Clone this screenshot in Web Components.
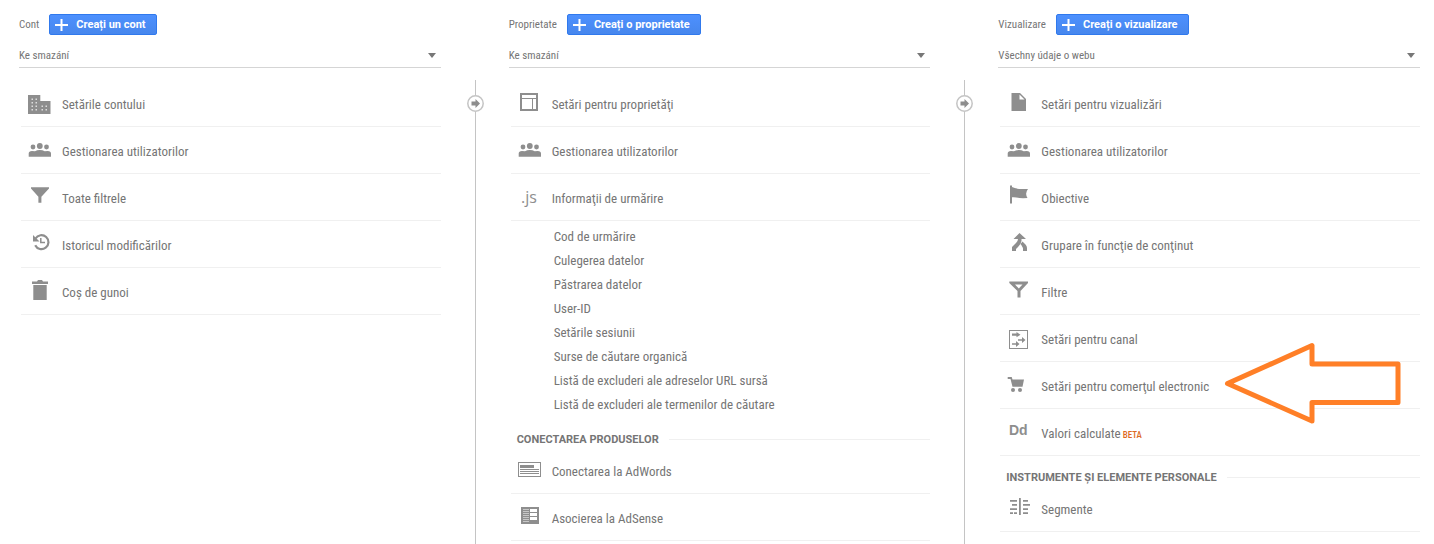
<!DOCTYPE html>
<html lang="ro">
<head>
<meta charset="utf-8">
<meta name="viewport" content="width=device-width, initial-scale=1">
<title>Administrare</title>
<style>
body { margin: 0; background: #fff; color: #757575; font-family: "Roboto Condensed", Roboto, "Liberation Sans", sans-serif; }
</style>
</head>
<body>
<admin-board>
  <admin-column label="Cont" action="Creați un cont" value="Ke smazání">
    <admin-row icon="building">Setările contului</admin-row>
    <admin-row icon="people">Gestionarea utilizatorilor</admin-row>
    <admin-row icon="funnel">Toate filtrele</admin-row>
    <admin-row icon="history">Istoricul modificărilor</admin-row>
    <admin-row icon="trash">Coș de gunoi</admin-row>
  </admin-column>
  <column-link></column-link>
  <admin-column label="Proprietate" action="Creați o proprietate" value="Ke smazání">
    <admin-row icon="layout">Setări pentru proprietăţi</admin-row>
    <admin-row icon="people">Gestionarea utilizatorilor</admin-row>
    <admin-row icon="js">Informaţii de urmărire</admin-row>
    <sub-menu>
      <sub-item>Cod de urmărire</sub-item>
      <sub-item>Culegerea datelor</sub-item>
      <sub-item>Păstrarea datelor</sub-item>
      <sub-item>User-ID</sub-item>
      <sub-item>Setările sesiunii</sub-item>
      <sub-item>Surse de căutare organică</sub-item>
      <sub-item>Listă de excluderi ale adreselor URL sursă</sub-item>
      <sub-item>Listă de excluderi ale termenilor de căutare</sub-item>
    </sub-menu>
    <section-title>CONECTAREA PRODUSELOR</section-title>
    <admin-row icon="adwords">Conectarea la AdWords</admin-row>
    <admin-row icon="adsense">Asocierea la AdSense</admin-row>
  </admin-column>
  <column-link></column-link>
  <admin-column label="Vizualizare" action="Creați o vizualizare" value="Všechny údaje o webu">
    <admin-row icon="file">Setări pentru vizualizări</admin-row>
    <admin-row icon="people">Gestionarea utilizatorilor</admin-row>
    <admin-row icon="flag">Obiective</admin-row>
    <admin-row icon="merge">Grupare în funcţie de conţinut</admin-row>
    <admin-row icon="filter">Filtre</admin-row>
    <admin-row icon="channel">Setări pentru canal</admin-row>
    <admin-row icon="cart">Setări pentru comerţul electronic<callout-arrow slot="callout"></callout-arrow></admin-row>
    <admin-row icon="dd">Valori calculate<beta-tag slot="tag">BETA</beta-tag></admin-row>
    <section-title>INSTRUMENTE ȘI ELEMENTE PERSONALE</section-title>
    <admin-row icon="segments">Segmente</admin-row>
  </admin-column>
</admin-board>

<script>
const define = (name, html, setup) => customElements.define(name, class extends HTMLElement {
  constructor() {
    super();
    const template = document.createElement('template');
    template.innerHTML = html;
    this.attachShadow({ mode: 'open' }).append(template.content);
  }
  connectedCallback() { if (setup) setup(this, this.shadowRoot); }
});

const icons = {
  building: '<path d="M0 7h12.300v6H22.500v13H0z"/><path fill="#fff" opacity=".7" d="M3.500 10.500H5V12H3.500zM7.500 10.500H9V12H7.500zM3.500 14H5v1.500H3.500zM7.500 14H9v1.500H7.500zM3.500 17.500H5V19H3.500zM7.500 17.500H9V19H7.500zM3.500 21H5v1.500H3.500zM7.500 21H9v1.500H7.500zM13.500 17.500H15V19h-1.500zM17.500 17.500H19V19h-1.500zM13.500 21H15v1.500h-1.500zM17.500 21H19v1.500h-1.500z"/>',
  people: '<circle cx="5" cy="12" r="2.400"/><circle cx="11.800" cy="11" r="2.900"/><circle cx="18.500" cy="12" r="2.400"/><path d="M.7 21.700V18.500Q.7 16 4 16q2 0 3 .3Q9 15 11.800 15t4.900 1.300q1-.3 3-.3 3.300 0 3.300 2.500v3.200z"/>',
  funnel: '<path d="M3 5.300h18v1.200l-7.600 8.200v6h-3v-6L3 6.500z"/>',
  history: '<path d="M7.500 9.500A7 7 0 1 1 7.200 16.300" fill="none" stroke="#8e8e8e" stroke-width="2.200"/><path d="M5 6v6.500h6.500z"/><path d="M12.800 9v4.500h4.200" fill="none" stroke="#8e8e8e" stroke-width="1.500"/>',
  trash: '<path d="M4 5.500h5L10 4h4l1 1.500h5V8H4zM5.300 9h13.400v15H5.300z"/>',
  layout: '<path fill-rule="evenodd" d="M2 5h18v18H2zM4 7v14h14V7z"/><path d="M4 10h14v1H4zM14 11h1v10h-1z"/>',
  js: '<text x="3" y="21" font-family="Open Sans" font-size="16">.js</text>',
  adwords: '<path fill-rule="evenodd" d="M0 7h23v15H0zM1 8v13h21V8z"/><path d="M2 10h14v3H2zM2 14h19v1H2zM2 16h19v1H2zM2 18h19v1H2z"/>',
  adsense: '<path d="M3 5h18v17H3z"/><path fill="#fff" d="M12 7h7v3h-7zM12 11h7v3h-7zM12 15h7v3h-7z"/><path fill="#fff" opacity=".5" d="M5 7h6v1H5zM5 9h6v1H5zM5 11h6v1H5zM5 13h6v1H5zM5 15h6v1H5zM5 17h6v1H5zM5 19h6v1H5z"/>',
  file: '<path d="M4.500 5H13l6 6v12H4.500z"/><path fill="#fff" d="M12.500 6.500 17.500 11.500H12.500z"/>',
  flag: '<path d="M3 3.500h2V5q3 1.500 7 2h9q-3.500 4.500-.5 9-7 .5-11-.5-2.500-.6-4.500-.2v6.200H3z"/>',
  merge: '<path d="M12.500 4 19 10H14.500V12Q14 15 11 18L9 20V22H5V18L9 14Q11 12 11 10H6.500zM13.500 15l2-2.500 3 3Q20 17 20 19v3h-4v-2.500q0-1-2.500-4.500z"/>',
  filter: '<path fill-rule="evenodd" d="M2.300 5.500H21V7l-7.500 8v6.500h-3V15L2.300 7zM8 8.500 11.800 12.500l3.700-4z"/>',
  channel: '<path fill-rule="evenodd" d="M2 7h19v19H2zM3 8v17h17V8z"/><path d="M5 10.500h4.500V9l4 2.700-4 2.600v-1.600H5zM11 16.200h4V14l3.500 3-3.500 3v-2.200h-4zM5 20.200h4V18l3.500 3L9 24v-2.200H5z"/>',
  cart: '<path d="M.7 7h4L5.500 9.500H17l-1.500 7.300H5.500L3.500 9H.7z"/><circle cx="6" cy="20" r="2"/><circle cx="13" cy="20" r="2"/>',
  dd: '<text x="2" y="18" font-family="Liberation Sans" font-weight="700" font-size="14">Dd</text>',
  segments: '<path d="M3 7h7v1.800H3zM5 11h5v1.800H5zM3 15.300h7v1.800H3zM3 19.300h3v1.800H3zM7 19.300h3v1.800H7zM12 5h1.800v17H12zM16 7h5v1.800h-5zM16 11h7v1.800h-7zM16 15.300h5v1.800h-5zM16 19.300h5v1.800h-5z"/>'
};

define('admin-board', `
<style>
:host { display: grid; grid-template-columns: minmax(0, 1fr) 68px minmax(0, 1fr) 68px minmax(0, 1fr); padding: 14px 14px 0 19px; min-height: 100vh; box-sizing: border-box; }
</style><slot></slot>`);

define('admin-column', `
<style>
:host { display: block; }
header { display: flex; align-items: center; gap: 10px; height: 21px; }
h2 { margin: 0; font-size: 11px; font-weight: 400; line-height: 20px; }
button { display: flex; align-items: center; gap: 8px; height: 21px; padding: 0 10px 0 5px; border: 1px solid #3079ed; border-radius: 2px; background: linear-gradient(#4d90fe, #4787ed); color: #fff; font-family: Roboto, sans-serif; font-size: 11px; font-weight: 700; line-height: 18px; white-space: nowrap; }
button svg { flex: none; width: 13px; height: 13px; }
.picker { display: flex; align-items: center; margin-top: 8px; height: 24px; border-bottom: 1px solid #d5d5d5; position: relative; }
select { appearance: none; width: 100%; height: 24px; margin: 0; padding: 0 24px 0 0; border: 0; background: none; color: inherit; font-family: inherit; font-size: 11px; }
.picker svg { position: absolute; right: 5px; width: 8px; height: 5px; pointer-events: none; }
nav { padding: 12px 0 0 2px; }
</style>
<header><h2></h2><button type="button"><svg viewBox="0 0 13 13"><path d="M5.500 1h2v5h5.500v2H7.500v5h-2V8H0V6h5.500z" fill="#fff"/></svg><span></span></button></header>
<div class="picker"><select><option></option></select><svg viewBox="0 0 8 5"><path d="M0 0h8L4 5z" fill="#777"/></svg></div>
<nav><slot></slot></nav>`, (host, root) => {
  root.querySelector('h2').textContent = host.getAttribute('label');
  root.querySelector('span').textContent = host.getAttribute('action');
  root.querySelector('option').textContent = host.getAttribute('value');
  root.querySelector('select').setAttribute('aria-label', host.getAttribute('label'));
  root.querySelector('nav').setAttribute('aria-label', host.getAttribute('label'));
});

define('admin-row', `
<style>
:host { display: block; position: relative; border-bottom: 1px solid #f0f0f0; }
a { display: flex; align-items: center; gap: 10px; height: 46px; padding-left: 7px; color: inherit; text-decoration: none; font-size: 13px; line-height: 18px; white-space: nowrap; }
svg { flex: none; width: 24px; height: 30px; fill: #8e8e8e; overflow: visible; }
.text { display: flex; align-items: baseline; gap: 2px; padding-top: 4px; }
</style>
<a href="#"><svg viewBox="0 0 24 30"></svg><span class="text"><span><slot></slot></span><slot name="tag"></slot></span></a><slot name="callout"></slot>`, (host, root) => {
  root.querySelector('svg').innerHTML = icons[host.getAttribute('icon')];
});

define('beta-tag', `<style>:host { color: #dd6b1f; font-size: 9px; font-weight: 500; }</style><slot></slot>`);

define('sub-menu', `<style>:host { display: block; padding: 4px 0 1px 43px; }</style><slot></slot>`);

define('sub-item', `
<style>
:host { display: block; }
a { display: block; color: inherit; text-decoration: none; font-size: 13px; line-height: 24px; white-space: nowrap; }
</style><a href="#"><slot></slot></a>`);

define('section-title', `
<style>
:host { display: block; padding: 13px 0 0 6px; }
h3 { display: flex; align-items: center; gap: 10px; margin: 0; height: 16px; font-family: Roboto, sans-serif; font-size: 11px; line-height: 16px; font-weight: 700; white-space: nowrap; }
span { padding-top: 2px; }
h3::after { content: ""; flex: 1; height: 1px; background: #f0f0f0; }
</style><h3><span><slot></slot></span></h3>`);

define('column-link', `
<style>
:host { display: flex; flex-direction: column; align-items: center; padding: 66px 0 0 1px; }
i { width: 1px; height: 15px; background: #c4c4c4; }
i:last-child { height: auto; flex: 1; }
svg { flex: none; width: 17px; height: 17px; }
</style>
<i></i><svg viewBox="0 0 17 17"><circle cx="8.500" cy="8.500" r="7.700" fill="#fff" stroke="#c4c4c4" stroke-width="1.500"/><path d="M4.500 6.500H8.500V4L13 8.500 8.500 13V10.500h-4z" fill="#8e8e8e"/></svg><i></i>`);

define('callout-arrow', `
<style>
:host { position: absolute; right: 18px; top: -21px; width: 180px; height: 84px; pointer-events: none; }
svg { display: block; }
</style>
<svg width="180" height="84" viewBox="0 0 180 84"><path d="M5.500 42.500 90 4.500V23h86v38.500H90V80z" fill="#fff" stroke="#ff7f27" stroke-width="5" stroke-linejoin="round"/></svg>`);
</script>
</body>
</html>
